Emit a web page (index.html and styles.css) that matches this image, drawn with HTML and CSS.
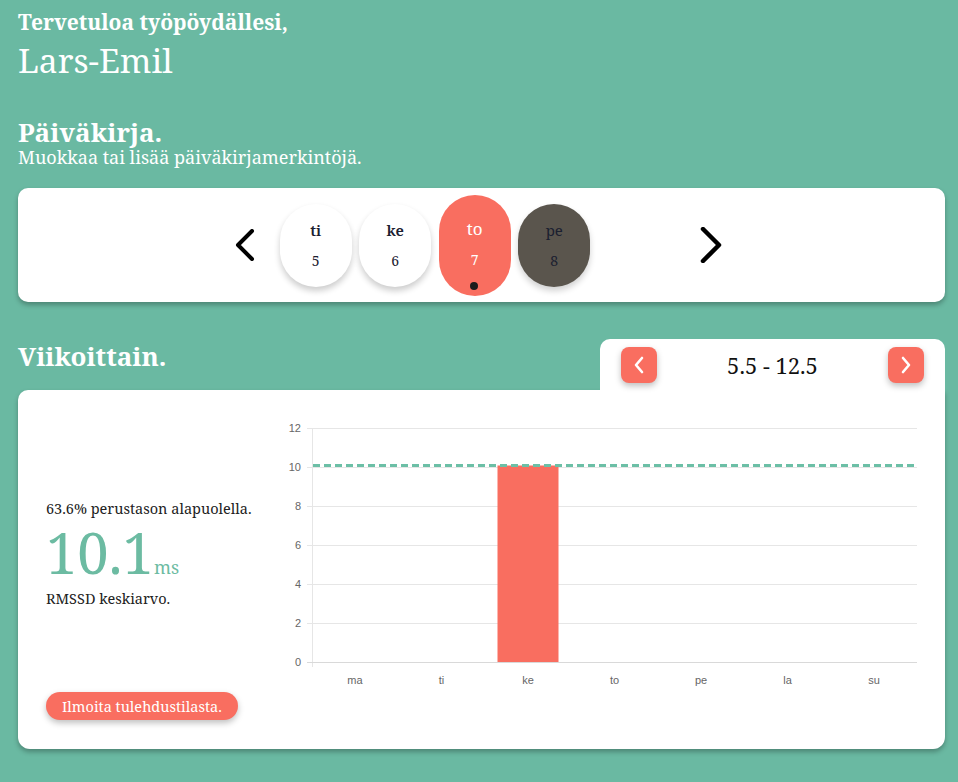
FILE: index.html
```html
<!DOCTYPE html>
<html lang="fi">
<head>
<meta charset="utf-8">
<title>Työpöytä</title>
<link rel="stylesheet" href="styles.css">
</head>
<body>
<main class="page">
  <header class="welcome">
    <p class="welcome-line">Tervetuloa työpöydällesi,</p>
    <h1 class="welcome-name">Lars-Emil</h1>
  </header>

  <section class="diary">
    <h2 class="section-title">Päiväkirja.</h2>
    <p class="section-sub">Muokkaa tai lisää päiväkirjamerkintöjä.</p>
    <div class="card day-card">
      <div class="day-row">
        <button class="day-arrow day-arrow-left" aria-label="Edellinen">
          <svg width="20" height="32" viewBox="0 0 20 32"><path d="M17 2 L3 16 L17 30" fill="none" stroke="#000" stroke-width="4" stroke-linecap="round" stroke-linejoin="round"/></svg>
        </button>
        <div class="pill"><span class="pill-day">ti</span><span class="pill-num">5</span></div>
        <div class="pill"><span class="pill-day">ke</span><span class="pill-num">6</span></div>
        <div class="pill pill-active"><span class="pill-day">to</span><span class="pill-num">7</span><span class="pill-dot"></span></div>
        <div class="pill pill-dark"><span class="pill-day">pe</span><span class="pill-num">8</span></div>
        <div class="pill-spacer"></div>
        <button class="day-arrow day-arrow-right" aria-label="Seuraava">
          <svg width="22" height="36" viewBox="0 0 22 36"><path d="M3 2 L19 18 L3 34" fill="none" stroke="#000" stroke-width="4.5" stroke-linecap="round" stroke-linejoin="round"/></svg>
        </button>
      </div>
    </div>
  </section>

  <section class="weekly">
    <div class="weekly-head">
      <h2 class="section-title weekly-title">Viikoittain.</h2>
      <div class="week-tab">
        <button class="week-btn" aria-label="Edellinen viikko">
          <svg width="14" height="20" viewBox="0 0 14 20"><path d="M10 3 L4 10 L10 17" fill="none" stroke="#fff" stroke-width="2.6" stroke-linecap="round" stroke-linejoin="round"/></svg>
        </button>
        <span class="week-range">5.5 - 12.5</span>
        <button class="week-btn" aria-label="Seuraava viikko">
          <svg width="14" height="20" viewBox="0 0 14 20"><path d="M4 3 L10 10 L4 17" fill="none" stroke="#fff" stroke-width="2.6" stroke-linecap="round" stroke-linejoin="round"/></svg>
        </button>
      </div>
    </div>
    <div class="card week-card">
      <div class="week-body">
        <div class="stats-col">
          <div class="stats">
            <p class="stat-line">63.6% perustason alapuolella.</p>
            <p class="stat-value">10.1<span class="stat-unit">ms</span></p>
            <p class="stat-line stat-label">RMSSD keskiarvo.</p>
          </div>
          <button class="report-btn">Ilmoita tulehdustilasta.</button>
        </div>
        <svg class="chart" width="645" height="290" viewBox="0 0 645 290">
          <g stroke="#e6e6e6" stroke-width="1">
            <line x1="27" y1="18.5" x2="637" y2="18.5"/>
            <line x1="27" y1="57.5" x2="637" y2="57.5"/>
            <line x1="27" y1="96.5" x2="637" y2="96.5"/>
            <line x1="27" y1="135.5" x2="637" y2="135.5"/>
            <line x1="27" y1="174.5" x2="637" y2="174.5"/>
            <line x1="27" y1="213.5" x2="637" y2="213.5"/>
            <line x1="32.5" y1="18" x2="32.5" y2="257"/>
          </g>
          <line x1="27" y1="252.5" x2="637" y2="252.5" stroke="#d9d9d9" stroke-width="1"/>
          <rect x="217.5" y="55.5" width="61" height="196.5" fill="#f96e60"/>
          <line x1="33" y1="55.5" x2="637" y2="55.5" stroke="#6cbfa6" stroke-width="3" stroke-dasharray="7 4"/>
          <g class="axis-y" text-anchor="end">
            <text x="21" y="22">12</text>
            <text x="21" y="61">10</text>
            <text x="21" y="100">8</text>
            <text x="21" y="139">6</text>
            <text x="21" y="178">4</text>
            <text x="21" y="217">2</text>
            <text x="21" y="256">0</text>
          </g>
          <g class="axis-x" text-anchor="middle">
            <text x="75" y="274">ma</text>
            <text x="161.5" y="274">ti</text>
            <text x="248" y="274">ke</text>
            <text x="334.5" y="274">to</text>
            <text x="421" y="274">pe</text>
            <text x="507.5" y="274">la</text>
            <text x="594" y="274">su</text>
          </g>
        </svg>
      </div>
    </div>
  </section>
</main>
</body>
</html>
```

FILE: styles.css
```css
* { box-sizing: border-box; }

html, body {
  margin: 0;
  padding: 0;
  background: #6ab9a2;
  font-family: "Noto Serif", "DejaVu Serif", "Liberation Serif", serif;
  font-weight: 400;
  color: #ffffff;
}

.page {
  padding: 10px 13px 30px 18px;
}

p, h1, h2 { margin: 0; }

.welcome-line {
  font-size: 21px;
  line-height: 24px;
  font-weight: 700;
}

.welcome-name {
  font-size: 33.5px;
  line-height: 40px;
  font-weight: 400;
  margin-top: 6px;
}

.section-title {
  font-size: 26px;
  line-height: 30px;
  font-weight: 700;
}

.diary { margin-top: 37px; }

.section-sub {
  font-size: 18px;
  line-height: 20px;
}

.card {
  background: #ffffff;
  color: #222222;
  border-radius: 10px;
  box-shadow: 0 3px 5px rgba(0, 0, 0, 0.28);
}

.day-card {
  margin-top: 21px;
  height: 114px;
  display: flex;
  align-items: center;
  justify-content: center;
  padding-right: 6px;
}

.day-row {
  display: flex;
  align-items: center;
  gap: 7.5px;
}

.day-arrow {
  background: none;
  border: 0;
  padding: 0;
  display: flex;
  align-items: center;
  cursor: pointer;
}

.day-arrow-left { margin-right: 17.5px; }
.day-arrow-right { margin-left: 23px; }

.pill {
  width: 72px;
  height: 83px;
  border-radius: 36px;
  background: #ffffff;
  box-shadow: 0 4px 6px rgba(0, 0, 0, 0.2);
  display: flex;
  flex-direction: column;
  align-items: center;
  padding-top: 15px;
  color: #1b2030;
  position: relative;
}

.pill-day {
  font-size: 15px;
  line-height: 22px;
  font-weight: 600;
}

.pill-num {
  font-size: 14px;
  line-height: 20px;
  margin-top: 10px;
}

.pill-active {
  height: 101px;
  background: #f96e60;
  color: #ffffff;
  padding-top: 23px;
  box-shadow: none;
}

.pill-active .pill-day {
  font-size: 17px;
  font-weight: 400;
}

.pill-dot {
  position: absolute;
  left: 31.5px;
  bottom: 6px;
  width: 8px;
  height: 8px;
  border-radius: 50%;
  background: #1c1c1c;
}

.pill-dark {
  background: #5a554d;
  color: #1b2030;
  box-shadow: 0 4px 6px rgba(0, 0, 0, 0.18);
}

.pill-dark .pill-day { font-weight: 400; }

.pill-spacer { width: 72px; height: 1px; }

.weekly { margin-top: 37px; }

.weekly-head {
  display: flex;
  justify-content: space-between;
  align-items: flex-start;
}

.weekly-title { margin-top: 2px; }

.week-tab {
  width: 345px;
  height: 51px;
  background: #ffffff;
  border-radius: 10px 10px 0 0;
  display: flex;
  align-items: flex-start;
  justify-content: space-between;
  padding: 8px 21px 0 21px;
  color: #111111;
}

.week-btn {
  width: 36px;
  height: 36px;
  border: 0;
  border-radius: 8px;
  background: #f96e60;
  box-shadow: 0 3px 6px rgba(0, 0, 0, 0.25);
  display: flex;
  align-items: center;
  justify-content: center;
  padding: 0;
  cursor: pointer;
}

.week-range {
  font-size: 22px;
  line-height: 36px;
  font-weight: 400;
}

.week-card {
  border-radius: 10px 0 12px 12px;
  padding: 20px 0 29px 28px;
}

.week-body {
  display: flex;
  height: 310px;
}

.stats-col {
  width: 234px;
  display: flex;
  flex-direction: column;
}

.stats {
  margin: auto 0;
  padding-top: 3px;
}

.stat-line {
  font-size: 14.5px;
  line-height: 20px;
  color: #222222;
}

.stat-value {
  font-size: 56px;
  line-height: 68px;
  color: #6cbba2;
}

.stat-unit {
  font-size: 18px;
  line-height: 1;
}

.stat-label { margin-top: 2px; }

.report-btn {
  align-self: flex-start;
  height: 28px;
  padding: 0 16px;
  border: 0;
  border-radius: 14px;
  background: #f96e60;
  color: #ffffff;
  font-family: inherit;
  font-weight: 400;
  font-size: 14.5px;
  box-shadow: 0 3px 6px rgba(0, 0, 0, 0.25);
  cursor: pointer;
}

.chart { display: block; }

.axis-y text,
.axis-x text {
  font-family: "Liberation Sans", Arial, sans-serif;
  font-size: 11px;
  fill: #666666;
}
```
